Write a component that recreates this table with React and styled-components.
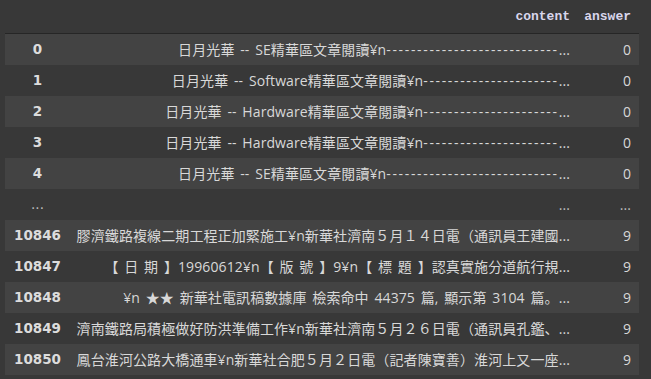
import React from "react";
import styled, { createGlobalStyle } from "styled-components";

const GlobalStyle = createGlobalStyle`
  html, body {
    margin: 0;
    padding: 0;
    background: #383838;
  }
`;

const rows = [
  { idx: "0", content: "日月光華 -- SE精華區文章閱讀¥n" + "-".repeat(28) + "...", answer: "0" },
  { idx: "1", content: "日月光華 -- Software精華區文章閱讀¥n" + "-".repeat(22) + "...", answer: "0" },
  { idx: "2", content: "日月光華 -- Hardware精華區文章閱讀¥n" + "-".repeat(22) + "...", answer: "0" },
  { idx: "3", content: "日月光華 -- Hardware精華區文章閱讀¥n" + "-".repeat(22) + "...", answer: "0" },
  { idx: "4", content: "日月光華 -- SE精華區文章閱讀¥n" + "-".repeat(28) + "...", answer: "0" },
  { idx: "...", content: "...", answer: "...", ellipsis: true },
  { idx: "10846", content: "膠濟鐵路複線二期工程正加緊施工¥n新華社濟南５月１４日電（通訊員王建國...", answer: "9" },
  { idx: "10847", content: "【 日 期 】19960612¥n【 版 號 】9¥n【 標 題 】認真實施分道航行規...", answer: "9" },
  { idx: "10848", content: "¥n ★★ 新華社電訊稿數據庫 檢索命中 44375 篇, 顯示第 3104 篇。...", answer: "9" },
  { idx: "10849", content: "濟南鐵路局積極做好防洪準備工作¥n新華社濟南５月２６日電（通訊員孔鑑、...", answer: "9" },
  { idx: "10850", content: "鳳台淮河公路大橋通車¥n新華社合肥５月２日電（記者陳寶善）淮河上又一座...", answer: "9" },
];

const renderText = text =>
  text.split(/(-{3,})/).map((part, i) =>
    /^-{3,}$/.test(part) ? <Dashes key={i}>{part}</Dashes> : part
  );

const Page = styled.div`
  padding: 0 12px 0 5px;
`;

const Table = styled.table`
  width: 634px;
  table-layout: fixed;
  border-collapse: collapse;
  border-spacing: 0;
  color: #d5d5d5;
`;

const HeadCell = styled.th`
  height: 33px;
  padding: 0 8px 0 0;
  text-align: right;
  font-family: "Liberation Mono", "DejaVu Sans Mono", monospace;
  font-weight: bold;
  font-size: 13px;
  color: #d9d6ec;
  border-bottom: 1px solid #262626;
  white-space: nowrap;
`;

const Row = styled.tr`
  height: 31px;
  background: ${p => (p.$striped ? "#434343" : "transparent")};
`;

const IndexCell = styled.th`
  padding: 0;
  text-align: center;
  font-family: "DejaVu Sans", Verdana, sans-serif;
  font-weight: ${p => (p.$ellipsis ? "normal" : "bold")};
  font-size: 13.5px;
  color: ${p => (p.$ellipsis ? "#bdbdbd" : "#dcdcdc")};
  white-space: nowrap;
`;

const Cell = styled.td`
  padding: 0 8px 0 0;
  text-align: right;
  font-family: "Open Sans", "Noto Sans CJK JP", sans-serif;
  font-size: 14px;
  letter-spacing: 0.1px;
  word-spacing: 2px;
  color: ${p => (p.$ellipsis ? "#bdbdbd" : "#d8d8d8")};
  white-space: nowrap;
  overflow: hidden;
`;

const Dashes = styled.span`
  letter-spacing: 1.65px;
`;

export default function App() {
  return (
    <Page>
      <GlobalStyle />
      <Table>
        <colgroup>
          <col style={{ width: 65 }} />
          <col style={{ width: 508 }} />
          <col style={{ width: 61 }} />
        </colgroup>
        <thead>
          <tr>
            <HeadCell />
            <HeadCell>content</HeadCell>
            <HeadCell>answer</HeadCell>
          </tr>
        </thead>
        <tbody>
          {rows.map((r, i) => (
            <Row key={r.idx + i} $striped={i % 2 === 0}>
              <IndexCell $ellipsis={r.ellipsis}>{r.idx}</IndexCell>
              <Cell $ellipsis={r.ellipsis}>{renderText(r.content)}</Cell>
              <Cell $ellipsis={r.ellipsis}>{r.answer}</Cell>
            </Row>
          ))}
        </tbody>
      </Table>
    </Page>
  );
}
